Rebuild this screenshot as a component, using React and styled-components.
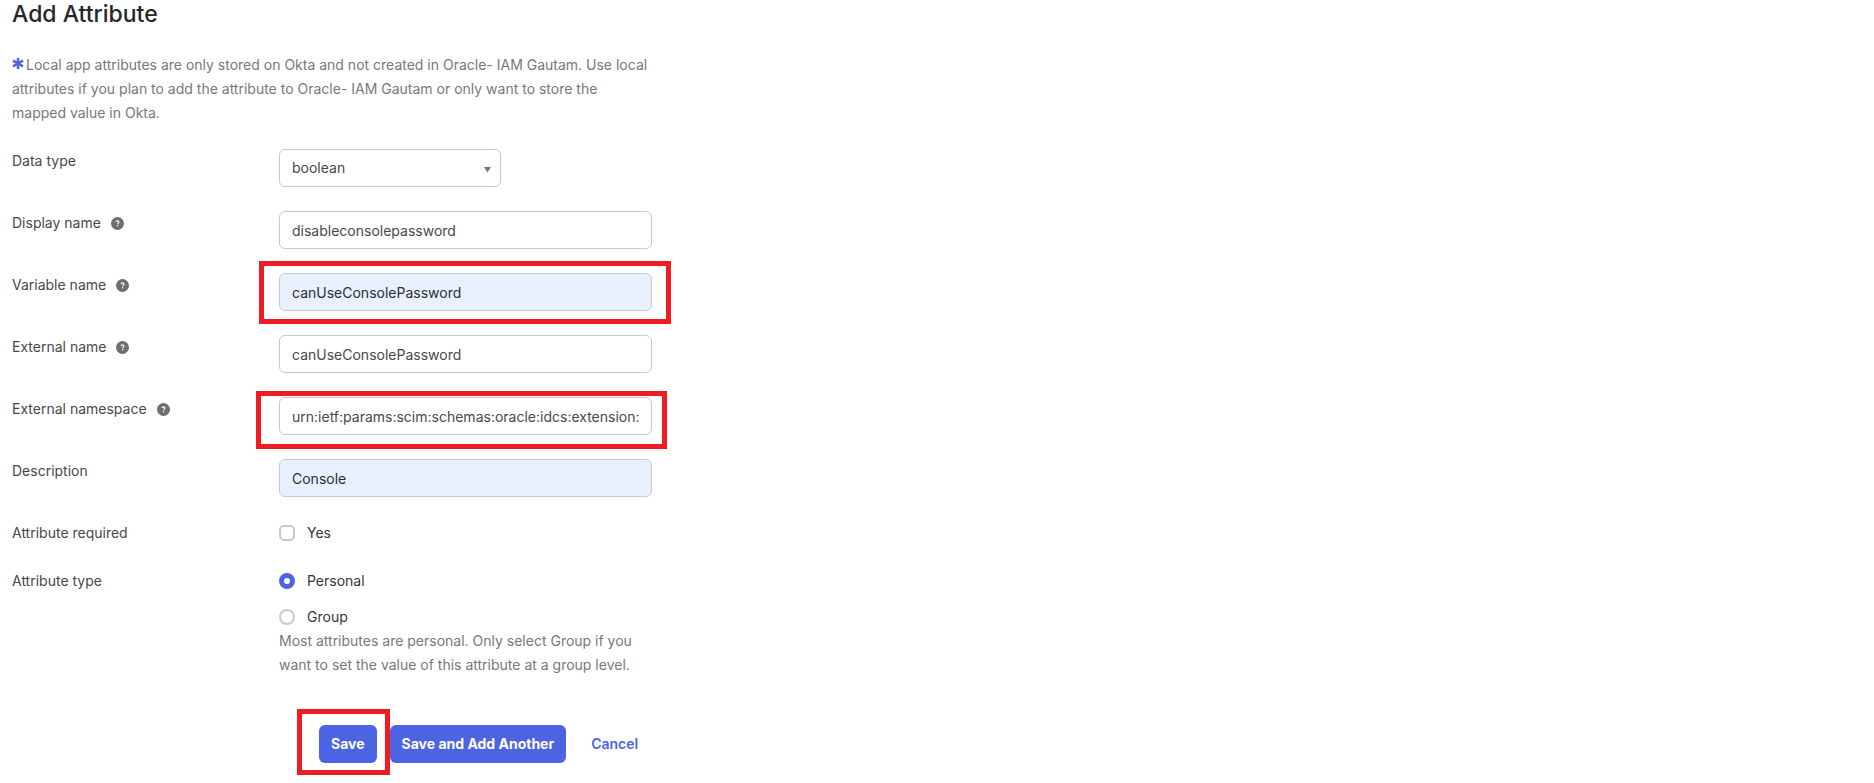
import React, { useState } from "react"
import styled, { createGlobalStyle, css } from "styled-components"

const GlobalStyle = createGlobalStyle`
  *, *::before, *::after {
    box-sizing: border-box;
  }

  body {
    margin: 0;
    background: #fff;
    color: #484848;
    font-family: Inter, "Liberation Sans", sans-serif;
    font-size: 14px;
    line-height: 24px;
  }

  button, input, select {
    font: inherit;
  }
`

const Page = styled.main`
  max-width: 664px;
  padding: 0 12px 16px;
`

const Title = styled.h1`
  margin: 0 0 25px;
  color: #272727;
  font-size: 23px;
  font-weight: 500;
  line-height: 28px;
`

const Intro = styled.p`
  margin: 0 0 24px;
  color: #787878;
`

const Asterisk = styled.svg`
  width: 12px;
  height: 12px;
  margin-right: 2px;
`

const StyledRow = styled.div`
  display: grid;
  grid-template-columns: 267px 1fr;
  align-items: start;
  margin-bottom: 24px;
`

const RowLabel = styled.div`
  display: flex;
  align-items: center;
  gap: 10px;
`

const HelpButton = styled.button`
  display: flex;
  padding: 0;
  border: 0;
  background: none;
  cursor: pointer;
`

const Control = styled.div`
  position: relative;
  display: ${(props) => (props.$inline ? "inline-flex" : "block")};
`

// Red frame laid over a control that the reader should notice
const Callout = styled.span`
  position: absolute;
  inset: ${(props) => props.$inset};
  border: 5px solid #ee1c25;
  pointer-events: none;
`

const fieldStyles = css`
  display: block;
  width: 100%;
  height: 38px;
  padding: 0 12px;
  border: 1px solid #c9c9c9;
  border-radius: 6px;
  background: #fff;
  color: #484848;
`

const TextInput = styled.input`
  ${fieldStyles}
  ${(props) =>
    props.$filled &&
    css`
      background: #e8f0fe;
      color: #2c2e33;
    `}
`

const SelectWrapper = styled.div`
  position: relative;
  max-width: 222px;
`

const StyledSelect = styled.select`
  ${fieldStyles}
  appearance: none;
`

const SelectArrow = styled.svg`
  position: absolute;
  top: 18px;
  right: 10px;
  width: 7px;
  height: 6px;
  pointer-events: none;
`

const OptionList = styled.div`
  display: flex;
  flex-direction: column;
  gap: 12px;
`

const Option = styled.label`
  display: flex;
  align-items: center;
  gap: 12px;
  color: #363636;
`

const Tick = styled.input`
  appearance: none;
  width: 16px;
  height: 16px;
  margin: 0;
  border: 2px solid #c9c9c9;
  border-radius: ${(props) => (props.type === "radio" ? "50%" : "5px")};
  background: #fff;

  &:checked {
    border: ${(props) => (props.type === "radio" ? "5px" : "2px")} solid #4c64e1;
  }
`

const Hint = styled.p`
  margin: 0;
  color: #787878;
`

const Actions = styled.div`
  display: flex;
  gap: 13px;
  margin: 48px 0 0 307px;
`

const Button = styled.button`
  height: 38px;
  padding: 0 12px;
  border: 0;
  border-radius: 6px;
  background: ${(props) => (props.$plain ? "none" : "#4c64e1")};
  color: ${(props) => (props.$plain ? "#4c64e1" : "#fff")};
  font-weight: ${(props) => (props.$plain ? 600 : 700)};
  white-space: nowrap;
  cursor: pointer;
`

const HelpIcon = () => (
  <svg width="13" height="13" viewBox="0 0 13 13" aria-hidden="true">
    <circle cx="6.5" cy="6.5" r="6.5" fill="#6e6e6e" />
    <path
      d="M5 5.1 C5 3.5 8 3.5 8 5.1 C8 6.1 6.6 6.1 6.6 7.3"
      fill="none"
      stroke="#fff"
      strokeWidth="1.1"
    />
    <rect x="6" y="8.1" width="1.2" height="1.2" fill="#fff" />
  </svg>
)

const Row = ({ label, htmlFor, help, children }) => (
  <StyledRow>
    <RowLabel>
      {htmlFor ? <label htmlFor={htmlFor}>{label}</label> : <span>{label}</span>}
      {!!help && (
        <HelpButton type="button" aria-label={`Help for ${label}`}>
          <HelpIcon />
        </HelpButton>
      )}
    </RowLabel>
    {children}
  </StyledRow>
)

const fields = [
  { id: "displayName", label: "Display name", help: true },
  { id: "variableName", label: "Variable name", help: true, filled: true, callout: "-12px -19px -13px -20px" },
  { id: "externalName", label: "External name", help: true },
  { id: "externalNamespace", label: "External namespace", help: true, callout: "-6px -15px -14px -23px" },
  { id: "description", label: "Description", filled: true },
]

const App = () => {
  const [values, setValues] = useState({
    displayName: "disableconsolepassword",
    variableName: "canUseConsolePassword",
    externalName: "canUseConsolePassword",
    externalNamespace: "urn:ietf:params:scim:schemas:oracle:idcs:extension:capabilities:User",
    description: "Console",
  })
  const [type, setType] = useState("personal")

  const handleChange = (e) => setValues({ ...values, [e.target.id]: e.target.value })

  return (
    <Page>
      <GlobalStyle />
      <Title>Add Attribute</Title>
      <Intro>
        <Asterisk viewBox="0 0 12 12" aria-hidden="true">
          <path d="M6 0V11M1 2.7L11 8.3M11 2.7L1 8.3" stroke="#4c64e1" strokeWidth="2.5" />
        </Asterisk>
        Local app attributes are only stored on Okta and not created in Oracle- IAM Gautam. Use local attributes if
        you plan to add the attribute to Oracle- IAM Gautam or only want to store the mapped value in Okta.
      </Intro>
      <form onSubmit={(e) => e.preventDefault()}>
        <Row label="Data type" htmlFor="dataType">
          <SelectWrapper>
            <StyledSelect id="dataType" defaultValue="boolean">
              <option>boolean</option>
            </StyledSelect>
            <SelectArrow viewBox="0 0 7 6" aria-hidden="true">
              <path d="M0 0H7L3.5 5.5Z" fill="#757575" />
            </SelectArrow>
          </SelectWrapper>
        </Row>
        {fields.map(({ id, label, help, filled, callout }) => (
          <Row key={id} label={label} htmlFor={id} help={help}>
            <Control>
              <TextInput id={id} type="text" value={values[id]} onChange={handleChange} $filled={filled} />
              {!!callout && <Callout $inset={callout} />}
            </Control>
          </Row>
        ))}
        <Row label="Attribute required">
          <Option>
            <Tick type="checkbox" />
            Yes
          </Option>
        </Row>
        <Row label="Attribute type">
          <div>
            <OptionList role="radiogroup" aria-label="Attribute type">
              <Option>
                <Tick
                  type="radio"
                  name="type"
                  checked={type === "personal"}
                  onChange={() => setType("personal")}
                />
                Personal
              </Option>
              <Option>
                <Tick type="radio" name="type" checked={type === "group"} onChange={() => setType("group")} />
                Group
              </Option>
            </OptionList>
            <Hint>
              Most attributes are personal. Only select Group if you want to set the value of this attribute at a
              group level.
            </Hint>
          </div>
        </Row>
        <Actions>
          <Control $inline>
            <Button type="submit">Save</Button>
            <Callout $inset="-16px -13px -12px -22px" />
          </Control>
          <Button type="button">Save and Add Another</Button>
          <Button type="button" $plain>
            Cancel
          </Button>
        </Actions>
      </form>
    </Page>
  )
}

export default App
